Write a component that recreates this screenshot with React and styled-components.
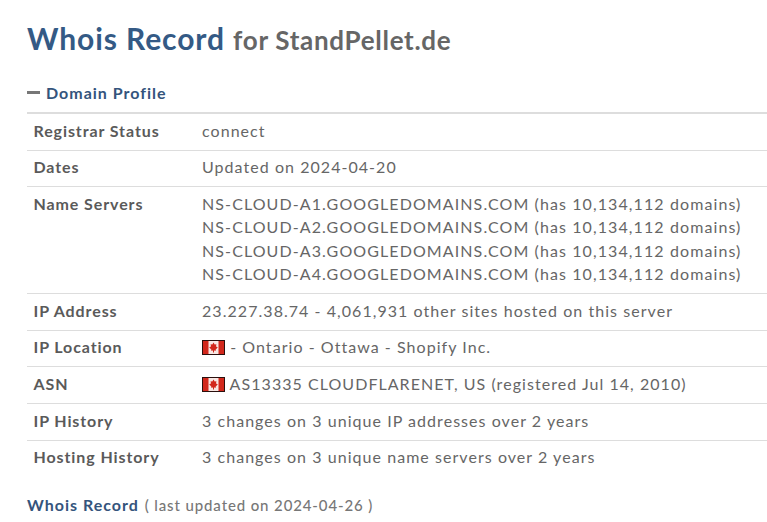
import React from "react";
import styled, { createGlobalStyle } from "styled-components";

const GlobalStyle = createGlobalStyle`
  html, body {
    margin: 0;
    padding: 0;
    background: #fff;
    overflow: hidden;
  }
  body {
    font-family: Lato, "Open Sans", sans-serif;
  }
`;

const Page = styled.div`
  width: 767px;
  height: 522px;
  box-sizing: border-box;
  padding: 18px 0 0 27px;
  overflow: hidden;
`;

const Heading = styled.h1`
  margin: 0;
  font-size: 30px;
  line-height: 40px;
  font-weight: 700;
  color: #345a85;
  letter-spacing: 0.9px;
  white-space: nowrap;
`;

const HeadingFor = styled.span`
  font-size: 26px;
  color: #666;
  letter-spacing: 0.7px;
`;

const SectionTitle = styled.div`
  display: flex;
  align-items: center;
  gap: 6px;
  margin-top: 20px;
  height: 24px;
  font-size: 16px;
  font-weight: 700;
  color: #34547c;
  letter-spacing: 1px;
`;

const Dash = styled.span`
  width: 13px;
  height: 3px;
  background: #777;
`;

const Table = styled.div`
  margin-top: 8px;
  border-top: 2px solid #ddd;
`;

const Row = styled.div`
  display: grid;
  grid-template-columns: 168.5px 1fr;
  padding: 4.7px 0 7.7px 6.5px;
  border-bottom: ${(p) => (p.$last ? "none" : "1px solid #ddd")};
  font-size: 16px;
  line-height: 23.3px;
  letter-spacing: 1.05px;
  white-space: nowrap;
`;

const Label = styled.div`
  font-weight: 700;
  color: #5a5a5a;
  letter-spacing: 0.9px;
`;

const Value = styled.div`
  color: #666;
`;

const ServerLine = styled.div`
  letter-spacing: 1.1px;
`;

const FlagIcon = styled.svg`
  width: 23px;
  height: 15px;
  vertical-align: -2px;
  filter: blur(0.45px);
`;

const Footer = styled.div`
  margin-top: 17px;
  font-size: 16px;
  line-height: 23px;
  letter-spacing: 1px;
  font-weight: 700;
  color: #34547c;
`;

const FooterNote = styled.span`
  margin-left: 1px;
  font-size: 15px;
  font-weight: 500;
  letter-spacing: 0.88px;
  color: #777;
`;

const servers = ["A1", "A2", "A3", "A4"];

const Flag = () => (
  <FlagIcon viewBox="0 0 23 15">
    <rect width="23" height="15" fill="#2a100e" />
    <rect x="1" y="1" width="21" height="13" fill="#f8e8e4" />
    <rect x="1" y="1" width="5.5" height="13" fill="#d2281c" />
    <rect x="16.5" y="1" width="5.5" height="13" fill="#d2281c" />
    <path d="M11.5 2.6 L12.7 4.6 L14.4 4.2 L14 6.6 L15.8 7.2 L13.6 9.8 L13.9 10.8 L12 10.5 V12.4 H11 V10.5 L9.1 10.8 L9.4 9.8 L7.2 7.2 L9 6.6 L8.6 4.2 L10.3 4.6 Z" fill="#d2281c" />
  </FlagIcon>
);

export default function App() {
  return (
    <Page>
      <GlobalStyle />
      <Heading>
        Whois Record <HeadingFor>for StandPellet.de</HeadingFor>
      </Heading>
      <SectionTitle>
        <Dash />
        Domain Profile
      </SectionTitle>
      <Table>
        <Row>
          <Label>Registrar Status</Label>
          <Value>connect</Value>
        </Row>
        <Row>
          <Label>Dates</Label>
          <Value>Updated on 2024-04-20</Value>
        </Row>
        <Row>
          <Label>Name Servers</Label>
          <Value>
            {servers.map((s) => (
              <ServerLine key={s}>NS-CLOUD-{s}.GOOGLEDOMAINS.COM (has 10,134,112 domains)</ServerLine>
            ))}
          </Value>
        </Row>
        <Row>
          <Label>IP Address</Label>
          <Value>23.227.38.74 - 4,061,931 other sites hosted on this server</Value>
        </Row>
        <Row>
          <Label>IP Location</Label>
          <Value>
            <Flag /> - Ontario - Ottawa - Shopify Inc.
          </Value>
        </Row>
        <Row>
          <Label>ASN</Label>
          <Value>
            <Flag /> AS13335 CLOUDFLARENET, US (registered Jul 14, 2010)
          </Value>
        </Row>
        <Row>
          <Label>IP History</Label>
          <Value>3 changes on 3 unique IP addresses over 2 years</Value>
        </Row>
        <Row $last>
          <Label>Hosting History</Label>
          <Value>3 changes on 3 unique name servers over 2 years</Value>
        </Row>
      </Table>
      <Footer>
        Whois Record <FooterNote>( last updated on 2024-04-26 )</FooterNote>
      </Footer>
    </Page>
  );
}
